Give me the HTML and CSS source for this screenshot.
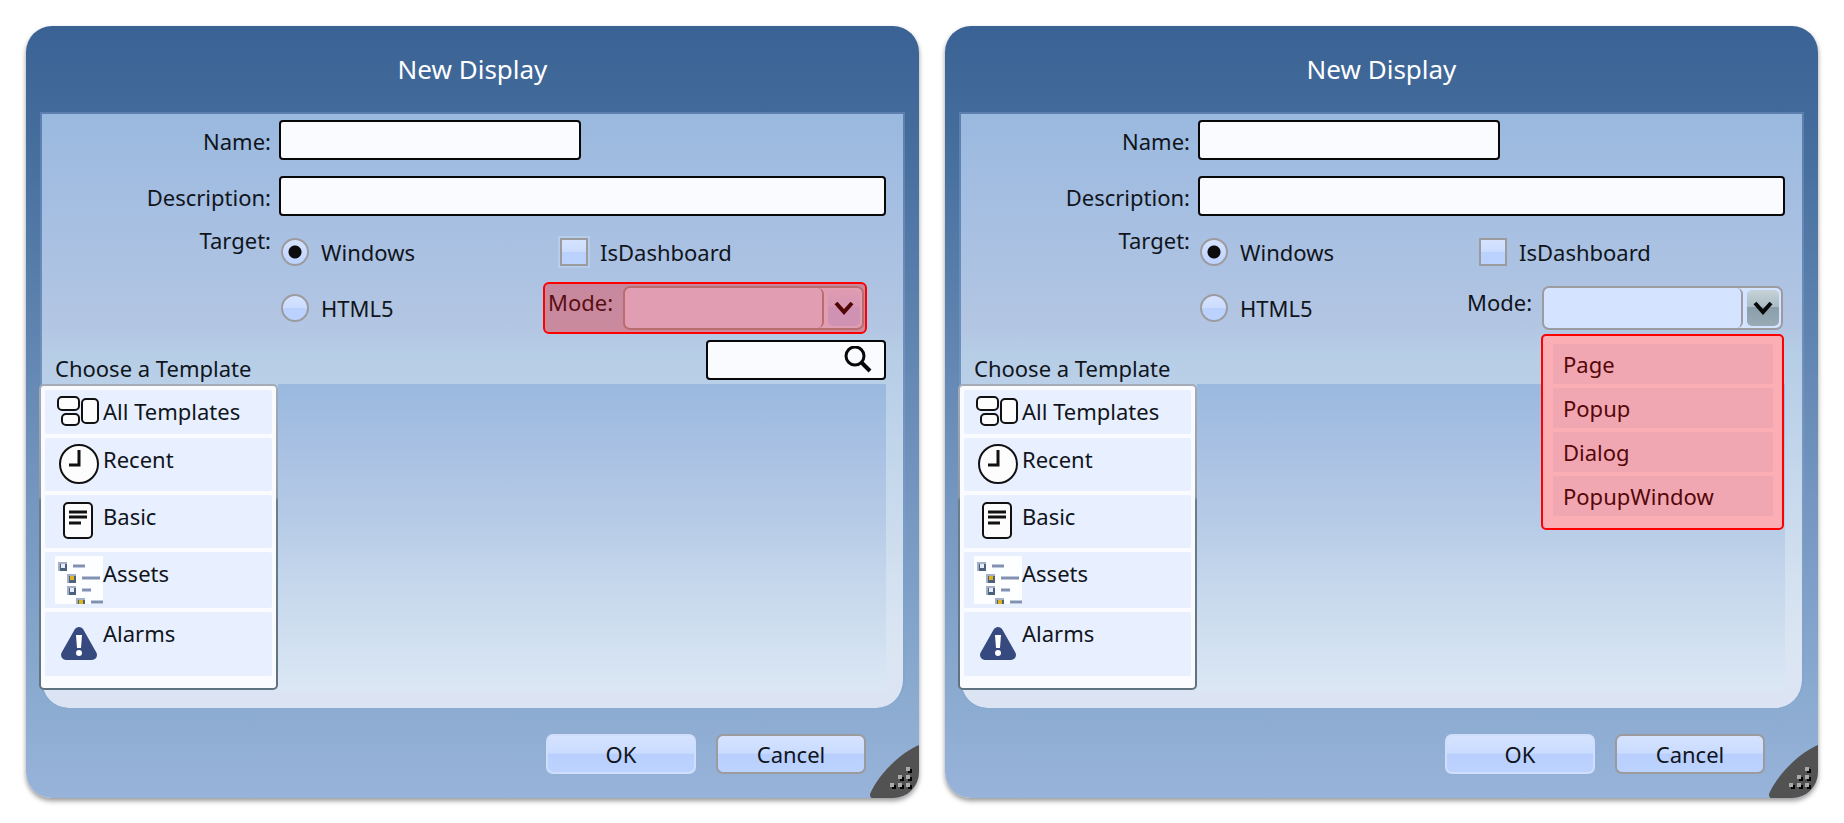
FILE: index.html
```html
<!DOCTYPE html>
<html lang="en">
<head>
    <meta charset="utf-8">
    <title>New Display</title>
    <link rel="stylesheet" href="styles.css">
</head>
<body>
    <!-- shared icons -->
    <svg class="sprite" aria-hidden="true">
        <symbol id="icon-all" viewBox="0 0 48 42">
            <g fill="#fdfdfd" stroke="#111" stroke-width="2">
                <rect x="3" y="4" width="21" height="13" rx="4"/>
                <rect x="7" y="21" width="17" height="11" rx="4"/>
                <rect x="27" y="6" width="16" height="24" rx="4"/>
            </g>
        </symbol>
        <symbol id="icon-recent" viewBox="0 0 48 42">
            <circle cx="24" cy="20" r="19" fill="#fdfdfd" stroke="#111" stroke-width="2"/>
            <path d="M24 6v15H14" fill="none" stroke="#111" stroke-width="3"/>
        </symbol>
        <symbol id="icon-basic" viewBox="0 0 48 42">
            <rect x="9" y="2" width="28" height="35" rx="4" fill="#fdfdfd" stroke="#111" stroke-width="2"/>
            <path d="M14 11h18M14 16h18M14 22h12" stroke="#111" stroke-width="3"/>
        </symbol>
        <symbol id="icon-assets" viewBox="0 0 48 48">
            <path d="M0 0h48v48H0z" fill="#fdfeff"/>
            <g fill="#4d607d">
                <path d="M3 6h9v9H3zM12 18h9v9h-9zM12 30h9v9h-9zM21 42h9v6h-9z"/>
            </g>
            <g fill="#a3b0c6">
                <path d="M3 6h9v2H5v7H3zM12 18h9v2h-7v7h-2zM12 30h9v2h-7v7h-2zM21 42h9v2h-7v4h-2z"/>
            </g>
            <path d="M6 8h4v4H6zM15 32h4v4h-4z" fill="#e4edf8"/>
            <path d="M15 20h4v4h-4zM24 44h4v4h-4z" fill="#dcb41c"/>
            <path d="M18 10h12M27 22h18M27 34h9M36 46h12" stroke="#8291b2" stroke-width="3"/>
        </symbol>
        <symbol id="icon-alarms" viewBox="0 0 48 42">
            <path d="M24 8L11 31H37z" fill="#374a80" stroke="#374a80" stroke-width="10" stroke-linejoin="round"/>
            <path d="M21 11h6l-1 13h-4z" fill="#fff"/>
            <circle cx="24" cy="29" r="3" fill="#fff"/>
        </symbol>
        <symbol id="icon-grip" viewBox="0 0 49 53">
            <path d="M49 0C30 8 8 30 0 49Q0 53 2 53H49z" fill="#525252"/>
            <path d="M37 24h4v4h-4zM29 32h4v4h-4zM37 32h4v4h-4zM21 40h4v4h-4zM29 40h4v4h-4zM37 40h4v4h-4z" fill="#000" transform="translate(1 0)"/>
            <path d="M36 22h4v4h-4zM28 30h4v4h-4zM36 30h4v4h-4zM20 38h4v4h-4zM28 38h4v4h-4zM36 38h4v4h-4z" fill="#aaa"/>
        </symbol>
        <symbol id="icon-arrow" viewBox="0 0 20 14">
            <path d="M2 2l8 9 8-9" fill="none" stroke="#080808" stroke-width="4"/>
        </symbol>
        <symbol id="icon-search" viewBox="0 0 28 28">
            <circle cx="11" cy="10" r="9" fill="none" stroke="#080808" stroke-width="3"/>
            <path d="M17 16l9 9" stroke="#080808" stroke-width="4"/>
        </symbol>
    </svg>

    <main class="page">
        <form class="dialog">
            <h2 class="title">New Display</h2>
            <div class="panel">
                <div class="fields">
                    <label class="caption" for="name1">Name:</label>
                    <input class="text short" type="text" id="name1">
                    <label class="caption" for="desc1">Description:</label>
                    <input class="text" type="text" id="desc1">
                    <span class="caption target">Target:</span>
                    <div class="options">
                        <label class="option"><input class="radio" type="radio" name="target1" checked> <span>Windows</span></label>
                        <label class="option"><input class="check glow" type="checkbox" name="dashboard1"> <span>IsDashboard</span></label>
                        <label class="option"><input class="radio" type="radio" name="target1"> <span>HTML5</span></label>
                        <div class="mode marked">
                            <label for="mode1">Mode:</label>
                            <div class="combo">
                                <select id="mode1"><option></option><option>Page</option><option>Popup</option><option>Dialog</option><option>PopupWindow</option></select>
                                <span class="arrow"><svg><use href="#icon-arrow"/></svg></span>
                            </div>
                        </div>
                    </div>
                </div>
                <div class="choose">
                    <h3 id="choose1">Choose a Template</h3>
                    <div class="search">
                        <input class="text" type="search" aria-label="Search templates">
                        <svg><use href="#icon-search"/></svg>
                    </div>
                </div>
                <div class="templates">
                    <ul class="list" aria-labelledby="choose1">
                        <li class="all"><svg><use href="#icon-all"/></svg><span>All Templates</span></li>
                        <li class="recent"><svg><use href="#icon-recent"/></svg><span>Recent</span></li>
                        <li class="basic"><svg><use href="#icon-basic"/></svg><span>Basic</span></li>
                        <li class="assets"><svg><use href="#icon-assets"/></svg><span>Assets</span></li>
                        <li class="alarms"><svg><use href="#icon-alarms"/></svg><span>Alarms</span></li>
                    </ul>
                    <div class="preview"></div>
                </div>
            </div>
            <div class="buttons">
                <button type="submit" class="ok">OK</button>
                <button type="button">Cancel</button>
            </div>
            <svg class="grip"><use href="#icon-grip"/></svg>
        </form>

        <form class="dialog">
            <h2 class="title">New Display</h2>
            <div class="panel">
                <div class="fields">
                    <label class="caption" for="name2">Name:</label>
                    <input class="text short" type="text" id="name2">
                    <label class="caption" for="desc2">Description:</label>
                    <input class="text" type="text" id="desc2">
                    <span class="caption target">Target:</span>
                    <div class="options">
                        <label class="option"><input class="radio" type="radio" name="target2" checked> <span>Windows</span></label>
                        <label class="option"><input class="check" type="checkbox" name="dashboard2"> <span>IsDashboard</span></label>
                        <label class="option"><input class="radio" type="radio" name="target2"> <span>HTML5</span></label>
                        <div class="mode">
                            <label for="mode2">Mode:</label>
                            <div class="combo open">
                                <select id="mode2"><option></option><option>Page</option><option>Popup</option><option>Dialog</option><option>PopupWindow</option></select>
                                <span class="arrow"><svg><use href="#icon-arrow"/></svg></span>
                                <ul class="menu">
                                    <li>Page</li>
                                    <li>Popup</li>
                                    <li>Dialog</li>
                                    <li>PopupWindow</li>
                                </ul>
                            </div>
                        </div>
                    </div>
                </div>
                <div class="choose">
                    <h3 id="choose2">Choose a Template</h3>
                </div>
                <div class="templates">
                    <ul class="list" aria-labelledby="choose2">
                        <li class="all"><svg><use href="#icon-all"/></svg><span>All Templates</span></li>
                        <li class="recent"><svg><use href="#icon-recent"/></svg><span>Recent</span></li>
                        <li class="basic"><svg><use href="#icon-basic"/></svg><span>Basic</span></li>
                        <li class="assets"><svg><use href="#icon-assets"/></svg><span>Assets</span></li>
                        <li class="alarms"><svg><use href="#icon-alarms"/></svg><span>Alarms</span></li>
                    </ul>
                    <div class="preview"></div>
                </div>
            </div>
            <div class="buttons">
                <button type="submit" class="ok">OK</button>
                <button type="button">Cancel</button>
            </div>
            <svg class="grip"><use href="#icon-grip"/></svg>
        </form>
    </main>
</body>
</html>
```

FILE: styles.css
```css
* {
    box-sizing: border-box;
}

body {
    margin: 0;
    font-family: "Noto Sans", "Open Sans", sans-serif;
    font-size: 22px;
    line-height: 30px;
    color: #10151c;
    background-color: #FFF;
}

h2, h3, ul {
    margin: 0;
    padding: 0;
    font-weight: 400;
    list-style: none;
}

.sprite {
    display: none;
}

.page {
    display: grid;
    grid-template-columns: minmax(0, 893fr) minmax(0, 873fr);
    align-items: start;
    gap: 26px;
    padding: 26px 26px 24px;
}

.dialog {
    position: relative;
    padding: 0 14px 24px;
    border-radius: 26px;
    background: linear-gradient(#3a6294, #446d9c 14%, #6a8db8 50%, #8aaad0 86%, #98b3d9);
    box-shadow: 0 3px 5px rgba(0, 0, 0, 0.4);
}

.title {
    padding: 25px 0;
    font-size: 26px;
    line-height: 36px;
    text-align: center;
    color: #FFF;
}

.panel {
    border: 2px solid rgba(130, 160, 205, 0.4);
    border-bottom-width: 0;
    border-radius: 0 0 28px 28px;
    background: linear-gradient(#9ab9df, #a8c0e2 20%, #b3c6e3 36%, #b6cde6 40%, #bcd2e9 50%, #dae5f2 88%, #dce4f3) padding-box;
    padding-bottom: 18px;
}

.fields {
    display: grid;
    grid-template-columns: 229px minmax(0, 1fr);
    column-gap: 8px;
    padding: 6px 17px 0 0;
}

.caption {
    text-align: right;
    padding-top: 6px;
}

.target {
    padding-top: 9px;
}

.text {
    width: 100%;
    height: 40px;
    padding: 0 10px;
    font: inherit;
    border: 2px solid #080808;
    border-radius: 4px;
    background: #fafbff;
    appearance: none;
}

.short {
    width: 302px;
    margin-bottom: 16px;
}

.options {
    display: grid;
    grid-template-columns: 264px minmax(0, 1fr);
    align-items: start;
}

.option {
    display: flex;
    align-items: flex-start;
    gap: 12px;
    height: 50px;
    padding: 22px 0 0 2px;
    line-height: 28px;
}

.option:nth-child(2) {
    padding-left: 17px;
}

.option:nth-child(3) {
    padding-top: 28px;
    height: 58px;
}

.radio, .check {
    appearance: none;
    flex: none;
    width: 28px;
    height: 28px;
    margin: 0;
    border: 2px solid #9c9c9f;
    background: linear-gradient(#d6e3ff, #cbdcff 50%, #bad1ff 51%, #bcd2ff);
}

.radio {
    border-radius: 50%;
}

.radio:checked {
    background: radial-gradient(circle, #0c0c0c 6px, transparent 7px), linear-gradient(#d6e3ff, #bcd2ff);
}

.glow {
    box-shadow: 0 0 0 2px rgba(185, 208, 238, 0.8);
}

.mode {
    position: relative;
    display: flex;
    justify-content: space-between;
    width: 324px;
    margin-top: 16px;
    padding: 4px 3px 4px 5px;
}

.mode label {
    padding-top: 1px;
}

.marked:after {
    content: "";
    position: absolute;
    inset: 0;
    border: 2px solid #F00;
    border-radius: 6px;
    background: rgba(255, 0, 0, 0.3);
    pointer-events: none;
}

.combo {
    position: relative;
    display: flex;
    width: 241px;
    height: 44px;
    border: 2px solid #9c9ca0;
    border-radius: 7px;
    background: #d4e3ff;
}

.combo select {
    appearance: none;
    flex: 1;
    font: inherit;
    margin: 0;
    border: none;
    border-right: 2px solid #9c9ca0;
    border-radius: 6px;
    background: none;
}

.arrow {
    display: grid;
    place-items: center;
    width: 32px;
    height: 36px;
    margin: 2px 2px 2px 4px;
    border-radius: 5px;
    background: linear-gradient(#d0dfff, #c6d8ff 47%, #bcd1ff 48%);
    pointer-events: none;
}

.arrow svg {
    width: 20px;
    height: 14px;
}

.open .arrow {
    background: linear-gradient(#c5d2d8, #abbcc4 47%, #8a9fab 48%, #98abb5);
}

.menu {
    position: absolute;
    z-index: 2;
    top: 46px;
    left: -3px;
    width: 243px;
    display: grid;
    gap: 4px;
    padding: 8px 9px 12px 10px;
    border: 2px solid #F00;
    border-radius: 5px;
    background: #fbafb4;
}

.menu li {
    height: 40px;
    padding: 5px 10px;
    border-radius: 2px;
    background: #f0a7b2;
    color: #550709;
}

.choose {
    display: flex;
    justify-content: space-between;
    height: 50px;
    padding: 6px 17px 0 13px;
}

.choose h3 {
    font-size: 22px;
    padding-top: 13px;
}

.search {
    position: relative;
    width: 180px;
}

.search svg {
    position: absolute;
    top: 6px;
    right: 14px;
    width: 28px;
    height: 28px;
}

.templates {
    display: flex;
    margin-left: -3px;
    padding-right: 17px;
}

.list {
    display: grid;
    gap: 4px;
    width: 239px;
    padding: 4px 4px 12px;
    border: 2px solid transparent;
    border-radius: 5px;
    background: linear-gradient(#fafbff, #fafbff) padding-box, linear-gradient(#a6acb6, #8f99a5 37%, #6c7e8b 38%, #5f727f) border-box;
}

.list li {
    display: flex;
    padding: 6px 10px;
    height: 53px;
    border-radius: 2px;
    background: #e8efff;
}

.list svg {
    flex: none;
    width: 48px;
    height: 42px;
}

.list .all {
    height: 44px;
    padding-top: 3px;
}

.list .all span {
    padding-top: 3px;
}

.list .assets {
    height: 56px;
    padding-top: 4px;
}

.assets svg {
    height: 48px;
}

.assets span {
    padding-top: 2px;
}

.list .alarms {
    height: 64px;
}

.alarms svg {
    margin-top: 6px;
}

.preview {
    flex: 1;
    background: linear-gradient(#9ab9df, #a9c1e3 22%, #b6cbe6 45%, #c5d7ec 65%, #dbe7f4);
}

.buttons {
    display: flex;
    justify-content: flex-end;
    gap: 20px;
    padding: 26px 39px 0 0;
}

.buttons button {
    width: 150px;
    height: 40px;
    padding: 0;
    font: inherit;
    color: inherit;
    border: 2px solid #9b9b9d;
    border-radius: 7px;
    background: linear-gradient(#d6e3ff, #c9dbff 48%, #b9d0ff 50%, #bcd3ff);
}

.buttons .ok {
    border-color: #cfdefa;
}

.grip {
    position: absolute;
    right: 0;
    bottom: 0;
    width: 49px;
    height: 53px;
    border-bottom-right-radius: 26px;
}
```
